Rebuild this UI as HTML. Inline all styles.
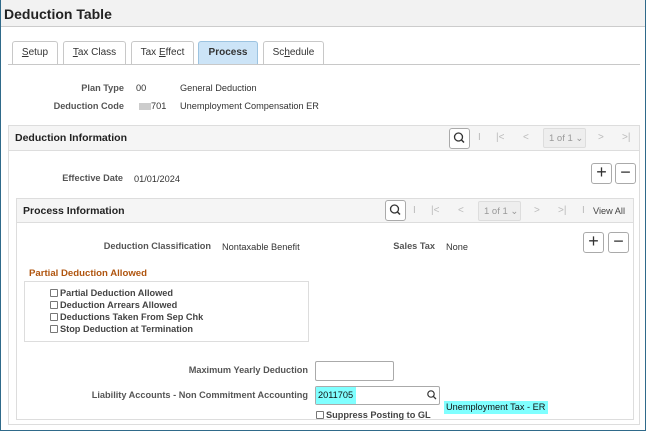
<!DOCTYPE html>
<html><head><style>
*{margin:0;padding:0;box-sizing:border-box}
body{width:646px;height:431px;overflow:hidden;background:#fff;font-family:"Liberation Sans",Arial,sans-serif;font-size:9.2px;color:#333;position:relative}
.a{position:absolute;white-space:nowrap}
.b{font-weight:bold}
.r{text-align:right}
.tab{position:absolute;top:41px;height:23px;border:1px solid #c8c8c8;border-bottom:none;border-radius:3px 3px 0 0;background:#fff;font-size:10px;text-align:center;line-height:22px;color:#333}
.btn{position:absolute;width:21px;height:21px;border:1px solid #aaa;border-radius:3px;background:#fff}
.pg{position:absolute;color:#bbb;font-size:10px}
.cb{position:absolute;width:8px;height:8px;border:1px solid #777;border-radius:1px;background:#fff}
</style></head><body>
<div class="a" style="left:0;top:0;width:646px;height:431px;border:1.5px solid #2f6a8a;border-top:none;border-bottom:1.5px solid #2f6a8a"></div>
<div class="a" style="left:1px;top:0;width:644px;height:27px;background:#f2f2f2;border-bottom:1px solid #ccc"></div>
<div class="a b" style="left:4px;top:6px;font-size:14px;color:#222">Deduction Table</div>

<div class="a" style="left:8px;top:64px;width:632px;height:1px;background:#c8c8c8"></div>
<div class="tab" style="left:12px;width:46px"><u>S</u>etup</div>
<div class="tab" style="left:63px;width:63px"><u>T</u>ax Class</div>
<div class="tab" style="left:131px;width:63px">Tax <u>E</u>ffect</div>
<div class="tab b" style="left:198px;width:60px;background:#cce4f7;border-color:#9cc3e0">Process</div>
<div class="tab" style="left:263px;width:61px">Sc<u>h</u>edule</div>

<div class="a b r" style="left:40px;width:84px;top:83px;color:#555">Plan Type</div>
<div class="a" style="left:136px;top:83px">00</div>
<div class="a" style="left:180px;top:83px">General Deduction</div>
<div class="a b r" style="left:30px;width:94px;top:101px;color:#555">Deduction Code</div>
<div class="a" style="left:139px;top:103px;width:12px;height:7px;background:#ccc"></div>
<div class="a" style="left:151px;top:101px">701</div>
<div class="a" style="left:180px;top:101px">Unemployment Compensation ER</div>

<div class="a" style="left:8px;top:125px;width:632px;height:300px;border:1px solid #ddd"></div>
<div class="a" style="left:9px;top:126px;width:630px;height:25px;background:#f5f5f5;border-bottom:1px solid #ddd"></div>
<div class="a b" style="left:15px;top:132px;font-size:10.5px;color:#222">Deduction Information</div>
<div class="btn" style="left:449px;top:128px"><svg width="19" height="19"><circle cx="8.5" cy="8" r="4" fill="none" stroke="#333" stroke-width="1.3"/><line x1="11.5" y1="11" x2="14" y2="13.5" stroke="#333" stroke-width="1.5"/></svg></div>
<div class="pg" style="left:478px;top:132px">I</div>
<div class="pg" style="left:496px;top:132px">|&lt;</div>
<div class="pg" style="left:523px;top:132px">&lt;</div>
<div class="a" style="left:543px;top:128px;width:43px;height:20px;background:#eee;border:1px solid #ddd;border-radius:2px;color:#999;font-size:9.5px;padding:4px 0 0 5px">1 of 1 ⌄</div>
<div class="pg" style="left:598px;top:132px">&gt;</div>
<div class="pg" style="left:622px;top:132px">&gt;|</div>

<div class="a b r" style="left:40px;width:83px;top:173px;color:#555">Effective Date</div>
<div class="a" style="left:134px;top:174px">01/01/2024</div>
<div class="btn" style="left:591px;top:163px;font-size:18px;line-height:17px;text-align:center;color:#333">+</div>
<div class="btn" style="left:615px;top:163px;font-size:18px;line-height:17px;text-align:center;color:#333">−</div>

<div class="a" style="left:16px;top:198px;width:618px;height:222px;border:1px solid #ddd"></div>
<div class="a" style="left:17px;top:199px;width:616px;height:24px;background:#f5f5f5;border-bottom:1px solid #ddd"></div>
<div class="a b" style="left:23px;top:205px;font-size:10.5px;color:#222">Process Information</div>
<div class="btn" style="left:385px;top:200px"><svg width="19" height="19"><circle cx="8.5" cy="8" r="4" fill="none" stroke="#333" stroke-width="1.3"/><line x1="11.5" y1="11" x2="14" y2="13.5" stroke="#333" stroke-width="1.5"/></svg></div>
<div class="pg" style="left:413px;top:205px">I</div>
<div class="pg" style="left:431px;top:205px">|&lt;</div>
<div class="pg" style="left:458px;top:205px">&lt;</div>
<div class="a" style="left:478px;top:201px;width:43px;height:20px;background:#eee;border:1px solid #ddd;border-radius:2px;color:#999;font-size:9.5px;padding:4px 0 0 5px">1 of 1 ⌄</div>
<div class="pg" style="left:534px;top:205px">&gt;</div>
<div class="pg" style="left:558px;top:205px">&gt;|</div>
<div class="pg" style="left:582px;top:205px">I</div>
<div class="a" style="left:593px;top:206px;color:#444">View All</div>

<div class="a b r" style="left:60px;width:151px;top:241px;color:#555">Deduction Classification</div>
<div class="a" style="left:222px;top:242px">Nontaxable Benefit</div>
<div class="a b r" style="left:360px;width:75px;top:241px;color:#555">Sales Tax</div>
<div class="a" style="left:446px;top:242px">None</div>
<div class="btn" style="left:583px;top:232px;font-size:18px;line-height:17px;text-align:center;color:#333">+</div>
<div class="btn" style="left:608px;top:232px;font-size:18px;line-height:17px;text-align:center;color:#333">−</div>

<div class="a b" style="left:29px;top:268px;color:#b0550f;font-size:9.6px">Partial Deduction Allowed</div>
<div class="a" style="left:24px;top:281px;width:285px;height:61px;border:1px solid #ddd"></div>
<div class="cb" style="left:50px;top:289px"></div><div class="a b" style="left:60px;top:288px;color:#444">Partial Deduction Allowed</div>
<div class="cb" style="left:50px;top:301px"></div><div class="a b" style="left:60px;top:300px;color:#444">Deduction Arrears Allowed</div>
<div class="cb" style="left:50px;top:313px"></div><div class="a b" style="left:60px;top:312px;color:#444">Deductions Taken From Sep Chk</div>
<div class="cb" style="left:50px;top:325px"></div><div class="a b" style="left:60px;top:324px;color:#444">Stop Deduction at Termination</div>

<div class="a b r" style="left:100px;width:208px;top:365px;color:#555">Maximum Yearly Deduction</div>
<div class="a" style="left:315px;top:361px;width:79px;height:20px;border:1px solid #aaa;border-radius:2px"></div>
<div class="a b r" style="left:40px;width:268px;top:390px;color:#555">Liability Accounts - Non Commitment Accounting</div>
<div class="a" style="left:315px;top:386px;width:125px;height:19px;border:1px solid #aaa;border-radius:2px"></div>
<div class="a" style="left:316px;top:387px;width:40px;height:17px;background:#80ffff"></div>
<div class="a" style="left:318px;top:390px;color:#111">2011705</div>
<svg class="a" style="left:426px;top:389px" width="12" height="12"><circle cx="5" cy="5" r="3.2" fill="none" stroke="#333" stroke-width="1.2"/><line x1="7.4" y1="7.4" x2="10" y2="10" stroke="#333" stroke-width="1.3"/></svg>
<div class="a" style="left:444px;top:401px;width:104px;height:13px;background:#80ffff"></div>
<div class="a" style="left:446px;top:402px;color:#111">Unemployment Tax - ER</div>
<div class="cb" style="left:316px;top:411px"></div>
<div class="a b" style="left:326px;top:410px;color:#444">Suppress Posting to GL</div>
</body></html>
